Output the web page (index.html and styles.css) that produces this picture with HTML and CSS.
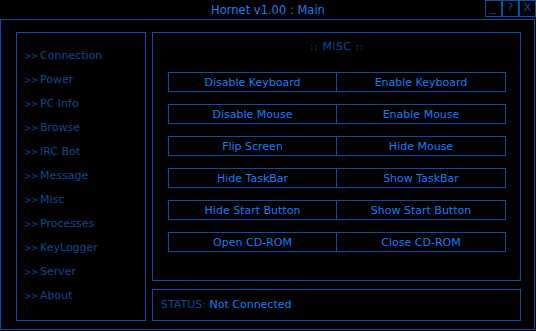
FILE: index.html
```html
<!DOCTYPE html>
<html lang="en">
<head>
    <meta charset="UTF-8">
    <title>Hornet v1.00 : Main</title>
    <link rel="stylesheet" href="styles.css">
</head>
<body>
    <div class="titlebar">
        <div></div>
        <div class="title">Hornet v1.00 : Main</div>
        <div class="win-btns">
            <span class="win-btn">_</span>
            <span class="win-btn">?</span>
            <span class="win-btn">X</span>
        </div>
    </div>

    <div class="frame">
        <ul class="menu">
            <li><span class="arrow">&gt;&gt;</span>Connection</li>
            <li><span class="arrow">&gt;&gt;</span>Power</li>
            <li><span class="arrow">&gt;&gt;</span>PC Info</li>
            <li><span class="arrow">&gt;&gt;</span>Browse</li>
            <li><span class="arrow">&gt;&gt;</span>IRC Bot</li>
            <li><span class="arrow">&gt;&gt;</span>Message</li>
            <li><span class="arrow">&gt;&gt;</span>Misc</li>
            <li><span class="arrow">&gt;&gt;</span>Processes</li>
            <li><span class="arrow">&gt;&gt;</span>KeyLogger</li>
            <li><span class="arrow">&gt;&gt;</span>Server</li>
            <li><span class="arrow">&gt;&gt;</span>About</li>
        </ul>

        <div class="right">
            <div class="panel">
                <div class="heading">:: MiSC ::</div>
                <div class="actions">
                    <div class="pair"><button>Disable Keyboard</button><button>Enable Keyboard</button></div>
                    <div class="pair"><button>Disable Mouse</button><button>Enable Mouse</button></div>
                    <div class="pair"><button>Flip Screen</button><button>Hide Mouse</button></div>
                    <div class="pair"><button>Hide TaskBar</button><button>Show TaskBar</button></div>
                    <div class="pair"><button>Hide Start Button</button><button>Show Start Button</button></div>
                    <div class="pair"><button>Open CD-ROM</button><button>Close CD-ROM</button></div>
                </div>
            </div>
            <div class="status">
                <span class="status-label">STATUS:</span> Not Connected
            </div>
        </div>
    </div>
</body>
</html>
```

FILE: styles.css
```css
* {
    margin: 0;
    padding: 0;
    box-sizing: border-box;
}

body {
    background: #000;
    font-family: "DejaVu Sans", sans-serif;
    font-size: 11px;
    color: #1a7cf2;
    width: 536px;
    height: 331px;
    overflow: hidden;
}

.titlebar {
    display: grid;
    grid-template-columns: 1fr auto 1fr;
    height: 19px;
}

.title {
    font-size: 11.5px;
    line-height: 21px;
    color: #1a7cf2;
}

.win-btns {
    display: flex;
    justify-content: flex-end;
    align-items: flex-start;
}

.win-btn {
    width: 17px;
    height: 17px;
    border: 1px solid #0b4ea6;
    color: #0b4ea6;
    text-align: center;
    line-height: 14px;
    font-size: 11px;
}

.frame {
    width: 535px;
    height: 311px;
    border: 1px solid #0b4ea6;
    display: flex;
    gap: 6px;
    padding: 12px 13px 8px 15px;
}

.menu {
    list-style: none;
    width: 130px;
    border: 1px solid #0b4ea6;
    padding: 11px 0 0 7px;
    color: #0c4896;
}

.menu li {
    line-height: 24px;
    height: 24px;
    font-size: 11px;
}

.arrow {
    display: inline-block;
    width: 16px;
    font-size: 9px;
    letter-spacing: -1px;
    vertical-align: top;
}

.right {
    flex: 1;
    display: flex;
    flex-direction: column;
    gap: 8px;
}

.panel {
    height: 249px;
    border: 1px solid #0b4ea6;
    padding: 7px 0 0 15px;
}

.heading {
    width: 338px;
    text-align: center;
    line-height: 14px;
    color: #0c4896;
    letter-spacing: 0.5px;
    margin-bottom: 18px;
}

.actions {
    display: flex;
    flex-direction: column;
    gap: 12px;
    width: 338px;
}

.pair {
    display: grid;
    grid-template-columns: 169px 169px;
}

.pair button {
    height: 20px;
    background: #000;
    border: 1px solid #0b4ea6;
    color: #1a7cf2;
    font-family: "DejaVu Sans", sans-serif;
    font-size: 11px;
}

.pair button + button {
    margin-left: -1px;
    width: 170px;
}

.status {
    flex: 1;
    border: 1px solid #0b4ea6;
    padding: 0 0 0 8px;
    line-height: 29px;
    color: #1a7cf2;
}

.status-label {
    color: #0c4896;
}
```
